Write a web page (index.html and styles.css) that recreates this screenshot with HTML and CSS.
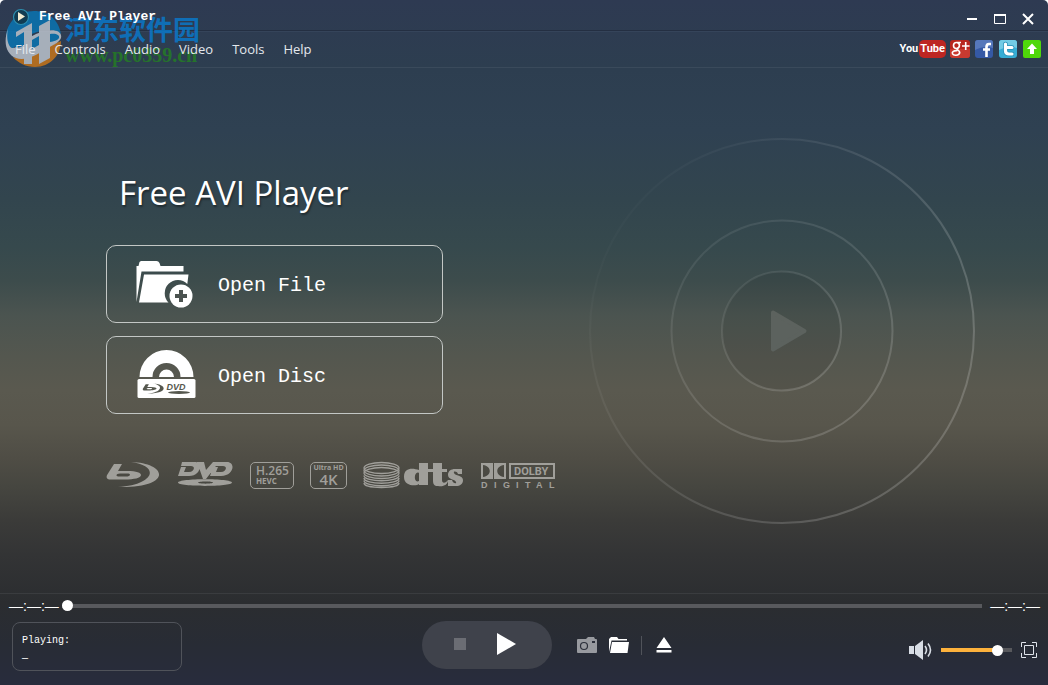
FILE: index.html
```html
<!DOCTYPE html>
<html lang="en">
<head>
<meta charset="utf-8">
<meta name="viewport" content="width=device-width, initial-scale=1">
<title>Free AVI Player</title>
<link rel="stylesheet" href="styles.css">
</head>
<body>
<div class="app">
  <div class="watermark">
    <svg width="58" height="58" viewBox="0 0 58 58" aria-hidden="true">
      <path d="M1 28C1 12 14 1 29 1c14 0 25 9 27 23-6-4-15-5-24-2C21 25 12 35 6 40 3 37 1 33 1 28z" fill="#0878b8"/>
      <path d="M8 47c10 3 19-1 29-7 8-5 15-7 19-9 0 14-11 26-26 26-9 0-17-4-22-10z" fill="#d07816"/>
      <path d="M3 19C-2 32 1 44 11 48c9 3 19-2 28-8 9-5 15-7 17-12 2-9-12-10-25-4C18 30 12 39 7 38 3 36 1 28 3 19z" fill="#c5ccd5"/>
      <path d="M11 27c5-3 7-4 8-4v12c-4 3-8 4-9 1zM27 30l7-4v9l-7 4zM45 24c6-1 10 1 9 4-2 3-5 3-9 4z" fill="#0878b8"/>
      <path d="M11 22l16-9v41h-8V22l-8 5zM34 16l11-6v38l-11 6z" fill="#c5ccd5"/>
    </svg>
    <div class="watermark-text"><span lang="zh">河东软件园</span><span class="site">www.pc0359.cn</span></div>
  </div>

  <header class="titlebar">
    <div class="brand">
      <svg class="brand-icon" viewBox="0 0 18 18" aria-hidden="true">
        <circle cx="9" cy="9" r="7.5" fill="#123c52" stroke="#2e8fb0" stroke-width="1.2"/>
        <path d="M6 4l7 4.5L6 13z" fill="#f2ecd2"/>
      </svg>
      <span class="brand-name">Free AVI Player</span>
    </div>
    <div class="window-buttons">
      <button type="button" aria-label="Minimize"><svg viewBox="0 0 12 12"><path d="M1 6h10" stroke="#fff" stroke-width="2"/></svg></button>
      <button type="button" aria-label="Maximize"><svg viewBox="0 0 12 12"><path d="M.5 1.500h11v9H.5z" fill="none" stroke="#fff"/><path d="M0 2h12" stroke="#fff" stroke-width="2"/></svg></button>
      <button type="button" aria-label="Close"><svg viewBox="0 0 12 12"><path d="M1 1l10 10M11 1L1 11" stroke="#fff" stroke-width="2"/></svg></button>
    </div>
  </header>

  <div class="menubar">
    <nav class="menu">
      <button type="button">File</button>
      <button type="button">Controls</button>
      <button type="button">Audio</button>
      <button type="button">Video</button>
      <button type="button">Tools</button>
      <button type="button">Help</button>
    </nav>
    <div class="social">
      <a href="#youtube" class="youtube" aria-label="YouTube"><span>You</span><span class="tube">Tube</span></a>
      <a href="#google" aria-label="Google Plus"><svg class="badge" viewBox="0 0 20 20">
        <rect x="0" y="1" width="20" height="18" rx="3" fill="#b8271f"/><path d="M0 10h20v6a3 3 0 0 1-3 3H3a3 3 0 0 1-3-3z" fill="#c93a30"/>
        <path d="M11 3.500H6.500a3 3 0 1 0 0 6 3 3 0 0 0 1-5.800M7.500 9.500c-1 1 .5 1.500 1.500 2.500 2 2.500-1 4.500-3.500 4.300-3-.2-4.200-2.500-2.200-3.900 1-.7 2.500-.8 4-.7M12 7h7.500M15.700 3v8" fill="none" stroke="#fff" stroke-width="1.600"/></svg></a>
      <a href="#facebook" aria-label="Facebook"><svg class="badge" viewBox="0 0 20 20">
        <rect x="1" y="1" width="18" height="18" rx="3" fill="#3559a5"/><path d="M1 4a3 3 0 0 1 3-3h12a3 3 0 0 1 3 3v5c-6-2-12-1-18 2z" fill="#5678bb"/>
        <path d="M17 5h-2c-2 0-2.500 1-2.500 3v10M9 10.500h7" fill="none" stroke="#fff" stroke-width="2.600"/></svg></a>
      <a href="#twitter" aria-label="Twitter"><svg class="badge" viewBox="0 0 20 20">
        <rect x="1" y="1" width="18" height="18" rx="3" fill="#37acd4"/><path d="M1 4a3 3 0 0 1 3-3h12a3 3 0 0 1 3 3v5c-6-2-12-1-18 2z" fill="#73cbe5"/>
        <path d="M7.500 5v6.500c0 2.500 1 3.500 3.500 3.500h3M7.500 8.500H14" fill="none" stroke="#238cb5" stroke-width="4.600" stroke-linecap="round"/>
        <path d="M7.500 5v6.500c0 2.500 1 3.500 3.500 3.500h3M7.500 8.500H14" fill="none" stroke="#fff" stroke-width="3.200" stroke-linecap="round"/></svg></a>
      <a href="#update" aria-label="Update"><svg class="badge" viewBox="0 0 20 20">
        <rect x="1" y="1" width="18" height="18" rx="2" fill="#4fd80a"/><path d="M10 4.500l5 5.500h-3v5H8v-5H5z" fill="#fff"/></svg></a>
    </div>
  </div>

  <main class="stage">
    <section class="welcome">
      <h1>Free AVI Player</h1>
      <div class="actions">
        <button type="button" class="action">
          <svg viewBox="0 0 60 52" aria-hidden="true">
            <path d="M1 44V8h2l1-4q1-1 2-1h15q2 0 3 2l1 3h23v5.500H6z" fill="#fff"/>
            <path d="M8.500 16.500H53l-1.200 9.500A13 13 0 0 0 33 44.500H3.500z" fill="#fff"/>
            <circle cx="45.500" cy="38" r="11.500" fill="#fff"/>
            <path d="M45.500 32v12M39.500 38h12" stroke="#4b5350" stroke-width="4"/>
          </svg>
          <span>Open File</span>
        </button>
        <button type="button" class="action">
          <svg viewBox="0 0 60 52" aria-hidden="true">
            <path d="M4 28a27 27 0 0 1 54 0H45a14 14 0 0 0-28 0zM23.500 28a7.500 7.500 0 0 1 15 0z" fill="#fff"/>
            <rect x="2" y="30" width="58" height="19" rx="1.500" fill="#fff"/>
            <g transform="translate(7 34) scale(.4)" fill="#55574e"><path fill-rule="evenodd" d="M8 3h8l-4 7h9c10 0 14 2 14 4 0 3-7 4.500-16 4.500H3c-3-1-3-3-1-6zm6 9.500c-4 0-5 3-1 3h7c4 0 6-3 1-3zM25 1c37 1 42 26-13 25 36-2 43-21 13-25z"/></g>
            <text x="31" y="41" class="disc-text">DVD</text>
            <ellipse cx="43.500" cy="43.500" rx="11" ry="1.500" fill="#55574e"/>
          </svg>
          <span>Open Disc</span>
        </button>
      </div>
      <ul class="formats">
        <li><svg width="56" height="28" viewBox="0 0 56 28" role="img" aria-label="Blu-ray">
          <path fill-rule="evenodd" d="M8 3h8l-4 7h9c10 0 14 2 14 4 0 3-7 4.500-16 4.500H3c-3-1-3-3-1-6zm6 9.500c-4 0-5 3-1 3h7c4 0 6-3 1-3zM25 1c37 1 42 26-13 25 36-2 43-21 13-25z"/></svg></li>
        <li><svg width="56" height="28" viewBox="0 0 56 28" role="img" aria-label="DVD">
          <path d="M4 1h13c8 0 6 14-6 14H0L3 6h5l-2 5h5c5 0 7-6 2-6H3zM19 1h7l2 8 7-8h6L28 18h-3zM38 1h11c9 0 7 14-6 14H32l3-9h5l-2 5h5c5 0 7-6 2-6h-9z"/>
          <path fill-rule="evenodd" d="M0 21.500C0 17 54 17 54 21.500S0 26 0 21.500zm20 0c0 1.500 15 1.500 15 0s-15-1.500-15 0z"/></svg></li>
        <li class="chip hevc"><span>H.265</span><small>HEVC</small></li>
        <li class="chip uhd"><small>Ultra HD</small><span>4K</span></li>
        <li><svg width="102" height="28" viewBox="0 0 102 28" role="img" aria-label="dts">
          <g fill="none" stroke="#a09f9a" stroke-width="1.300"><ellipse cx="18.500" cy="7" rx="17.500" ry="5.500"/><ellipse cx="18.500" cy="9.500" rx="17.500" ry="5.500"/><ellipse cx="18.500" cy="12" rx="17.500" ry="5.500"/><path d="M1 14.500c0 7 35 7 35 0M1 17c0 7 35 7 35 0M1 19.500c0 7 35 7 35 0M1 22c0 6 35 6 35 0"/></g>
          <path fill-rule="evenodd" d="M56 2h9v22h-9v-1c-2 2-15 3-15-7S50 7 56 9zm0 10c-5-3-6 11 0 8zM70 2h9v6h5v3h-5v8c0 4 4 3 6 0 0 5-5 7-10 6-4 0-5-2-5-6v-8h-5V8h5z"/>
          <path d="M99 8v5h-4c-1-3-5-3-4-1 1 3 9 2 9 7 0 4-3 6-7 6h-8v-6h4c1 4 5 4 4 2-1-3-8-2-8-7 0-4 3-6 7-6z"/></svg></li>
        <li><svg width="76" height="28" viewBox="0 0 76 28" role="img" aria-label="Dolby Digital">
          <path fill-rule="evenodd" d="M0 2h12v16H0zM2 4v12c9-1 9-11 0-12zM13 2h12v16H13zM23 4v12c-9-1-9-11 0-12zM28 2h46v16H28zm2 2v12h42V4z"/>
          <text x="33" y="14" class="dolby">DOLBY</text>
          <g class="digital"><text x="0" y="27">D</text><text x="13" y="27">I</text><text x="22" y="27">G</text><text x="35" y="27">I</text><text x="44" y="27">T</text><text x="55" y="27">A</text><text x="68" y="27">L</text></g></svg></li>
      </ul>
    </section>
    <svg class="rings" viewBox="0 0 386 386" aria-hidden="true">
      <defs><linearGradient id="fade" x1="0" y1="0.1" x2="0.85" y2="0.6"><stop offset="0" stop-color="#fff" stop-opacity="0"/><stop offset=".15" stop-color="#fff" stop-opacity=".02"/><stop offset="1" stop-color="#fff" stop-opacity=".18"/></linearGradient>
      <linearGradient id="soft" x1="0" y1="0" x2="1" y2="1"><stop offset="0" stop-color="#fff" stop-opacity=".06"/><stop offset="1" stop-color="#fff" stop-opacity=".18"/></linearGradient></defs>
      <circle cx="193" cy="193" r="192" fill="none" stroke="url(#fade)" stroke-width="2"/>
      <circle cx="193" cy="193" r="110.500" fill="none" stroke="url(#soft)" stroke-width="2"/>
      <circle cx="192.500" cy="193" r="59.500" fill="#000" fill-opacity=".06" stroke="url(#soft)" stroke-width="2"/>
      <path d="M184 174.500l31.500 18.500-31.500 18.500z" fill="#5c625e" stroke="#5c625e" stroke-width="4" stroke-linejoin="round"/>
    </svg>
  </main>

  <footer class="player">
    <div class="seek">
      <span class="time">—:—:—</span>
      <input type="range" class="seek-bar" aria-label="Position" min="0" max="100" value="0">
      <span class="time">—:—:—</span>
    </div>
    <div class="controls">
      <div class="now"><span>Playing:</span><span>—</span></div>
      <div class="transport">
        <div class="pill">
          <button type="button" aria-label="Stop"><svg width="12" height="12" viewBox="0 0 12 12"><path d="M0 0h12v12H0z" fill="#6b6d74"/></svg></button>
          <button type="button" aria-label="Play"><svg width="20" height="22" viewBox="0 0 20 22"><path d="M0 0l19 11L0 22z" fill="#fff"/></svg></button>
        </div>
        <div class="tools">
          <button type="button" aria-label="Snapshot"><svg width="20" height="16" viewBox="0 0 20 16"><path d="M1 2h8l2-2h6l1 2h1q1 0 1 1v12q0 1-1 1H1q-1 0-1-1V3q0-1 1-1z" fill="#989a9f"/><circle cx="7" cy="9" r="3.500" fill="none" stroke="#2c303b" stroke-width="1.200"/><path d="M15 4h3v2h-3z" fill="#2c303b"/></svg></button>
          <button type="button" aria-label="Open folder"><svg width="20" height="16" viewBox="0 0 20 16"><path d="M0 15V2l2-2h6l1.500 2H18v1.500H2.500z" fill="#fff"/><path d="M3 5h17l-1.500 11H1z" fill="#fff"/></svg></button>
          <i class="divider"></i>
          <button type="button" aria-label="Eject"><svg width="16" height="16" viewBox="0 0 16 16"><path d="M8 0l7.500 11H.5zM.500 13h15v2.500H.5z" fill="#fff"/></svg></button>
        </div>
      </div>
      <div class="sound">
        <button type="button" aria-label="Mute"><svg width="23" height="20" viewBox="0 0 23 20"><path d="M0 6h5v8H0zM6 6l8-6v20l-8-6z" fill="#d8dde5"/><path d="M16 6q3 4 0 8M19 3.500q5 6.500 0 13" fill="none" stroke="#d8dde5" stroke-width="1.600"/></svg></button>
        <input type="range" class="volume" aria-label="Volume" min="0" max="100" value="85">
        <button type="button" aria-label="Full screen"><svg width="16" height="16" viewBox="0 0 16 16"><path d="M.5 5V.5H5M11 .5h4.500V5M15.500 11v4.500H11M5 15.500H.5V11M3.500 3.500h9v9h-9z" fill="none" stroke="#dfe3ea"/></svg></button>
      </div>
    </div>
  </footer>
</div>
</body>
</html>
```
FILE: styles.css
```css
* { box-sizing: border-box; }

body {
  margin: 0;
  background: #fff;
  color: #fff;
  font-family: "Open Sans", "Noto Sans", sans-serif;
}

button {
  margin: 0;
  padding: 0;
  border: 0;
  background: none;
  color: inherit;
  font: inherit;
  cursor: pointer;
}

svg { display: block; }

.app {
  position: relative;
  display: flex;
  flex-direction: column;
  min-height: 100vh;
  border-radius: 5px 5px 0 0;
  background: linear-gradient(#2e3a52 0%, #2d3e50 10%, #2f4152 19%, #32454e 29%, #36494d 36%, #3d4c4c 41%, #4b5450 46%, #54574f 52%, #5a594f 57%, #58564c 62%, #4f4d45 67%, #464640 71%, #3b3b39 76%, #333435 81%, #2b2d30 88%, #282c35 94%, #282c3d 100%);
}

.titlebar {
  display: flex;
  justify-content: space-between;
  align-items: center;
  height: 31px;
  padding: 4px 14px 0 12px;
  border-bottom: 1px solid #242f42;
}

.brand { display: flex; align-items: center; gap: 9px; }
.brand-icon { width: 18px; height: 18px; }
.brand-name { font: bold 13px/18px "Liberation Mono", monospace; }

.window-buttons { display: flex; gap: 16px; padding-top: 4px; }
.window-buttons svg { width: 12px; height: 12px; }

.menubar {
  display: flex;
  justify-content: space-between;
  align-items: center;
  height: 37px;
  padding: 0 6px 2px 15px;
  border-top: 1px solid #35445a;
  border-bottom: 1px solid #3a4a5b;
}

.brand, .menu { position: relative; z-index: 1; }
.menu { display: flex; gap: 19px; color: #e4e8ed; font-size: 13px; line-height: 20px; }

.social { display: flex; align-items: center; gap: 4px; }
.badge { width: 20px; height: 20px; }
.youtube {
  display: flex;
  align-items: center;
  gap: 1px;
  color: #fff;
  font: bold 11px/18px Roboto, sans-serif;
  text-decoration: none;
}
.tube { padding: 0 1px; border-radius: 5px; background: #bd2622; }

.stage {
  flex: 1;
  display: flex;
  justify-content: space-between;
  align-items: center;
  gap: 32px;
  padding: 0 76px 0 106px;
}

h1 {
  margin: 0 0 31px 13px;
  font-size: 33px;
  font-weight: 400;
  line-height: 42px;
  text-shadow: 1px 2px 2px rgba(0, 0, 0, .4);
}

.actions { display: grid; gap: 13px; max-width: 337px; }
.action {
  display: flex;
  align-items: center;
  gap: 22px;
  height: 78px;
  padding-left: 28px;
  border: 1px solid #c3c7c5;
  border-radius: 10px;
  font: 20px/28px "Liberation Mono", monospace;
}
.action svg { width: 61px; height: 52px; }
.action span { padding-top: 4px; }
.disc-text { font: italic bold 9px "Liberation Sans", sans-serif; fill: #55574e; }

.formats {
  display: flex;
  align-items: center;
  gap: 16px;
  margin: 47px 0 0;
  padding: 0;
  list-style: none;
  color: #a09f9a;
  fill: #a09f9a;
}
.chip {
  display: flex;
  flex-direction: column;
  justify-content: center;
  height: 27px;
  border: 1px solid #a09f9a;
  border-radius: 5px;
}
.chip small { font-size: 7px; font-weight: 700; line-height: 8px; }
.hevc { width: 44px; padding-left: 5px; font-size: 12px; font-weight: 600; line-height: 12px; }
.hevc small { font-size: 8px; }
.uhd { width: 37px; align-items: center; font-size: 15px; font-weight: 600; line-height: 15px; }
.dolby { font: bold 11px Roboto, sans-serif; }
.digital { font: bold 9px "Liberation Sans", sans-serif; }

.rings { flex: none; width: 386px; height: 386px; }

.player { border-top: 1px solid #3a3c3f; }

.seek {
  display: flex;
  align-items: center;
  height: 23px;
  padding: 0 8px 0 9px;
}
.time { font: 14px/16px "Liberation Sans", sans-serif; white-space: nowrap; }

input[type="range"] {
  appearance: none;
  height: 12px;
  margin: 0;
  background: linear-gradient(#58595d, #58595d) center / 100% 4px no-repeat;
}
input[type="range"]::-webkit-slider-thumb {
  appearance: none;
  width: 11px;
  height: 11px;
  border-radius: 50%;
  background: #fff;
}
input[type="range"].seek-bar { flex: 1; min-width: 0; margin: 0 8px 0 3px; }
input[type="range"].volume {
  width: 71px;
  background: linear-gradient(90deg, #fdb23c 80%, #58595d 80%) center / 100% 4px no-repeat;
}

.controls {
  display: grid;
  grid-template-columns: 8fr 5fr 7fr;
  align-items: center;
  padding: 4px 11px 14px 12px;
}
.now {
  display: flex;
  flex-direction: column;
  width: 170px;
  height: 49px;
  padding: 9px;
  border: 1px solid #50535a;
  border-radius: 8px;
  font: 10px/18px "Liberation Mono", monospace;
}
.transport { display: flex; align-items: center; gap: 25px; padding-bottom: 2px; }
.pill {
  display: flex;
  align-items: center;
  gap: 31px;
  width: 130px;
  height: 48px;
  padding: 0 0 2px 32px;
  border-radius: 24px;
  background: #3f424b;
}
.tools { display: flex; align-items: center; gap: 12px; }
.tools button:last-child { margin-left: 2px; }
.divider { width: 1px; height: 19px; background: #50535a; }
.sound { display: flex; align-items: center; justify-content: flex-end; gap: 9px; padding-top: 8px; }

/* Site stamp behind the title and menu */
.watermark {
  position: absolute;
  top: 10px;
  left: 5px;
  display: flex;
  gap: 2px;
  opacity: .8;
  pointer-events: none;
}
.watermark-text {
  display: flex;
  flex-direction: column;
  padding-top: 5px;
  color: #087bd0;
  font: bold 27px/28px "Noto Sans CJK SC", sans-serif;
}
.site { color: #248022; font: bold 20px/24px "Liberation Serif", serif; }
```
